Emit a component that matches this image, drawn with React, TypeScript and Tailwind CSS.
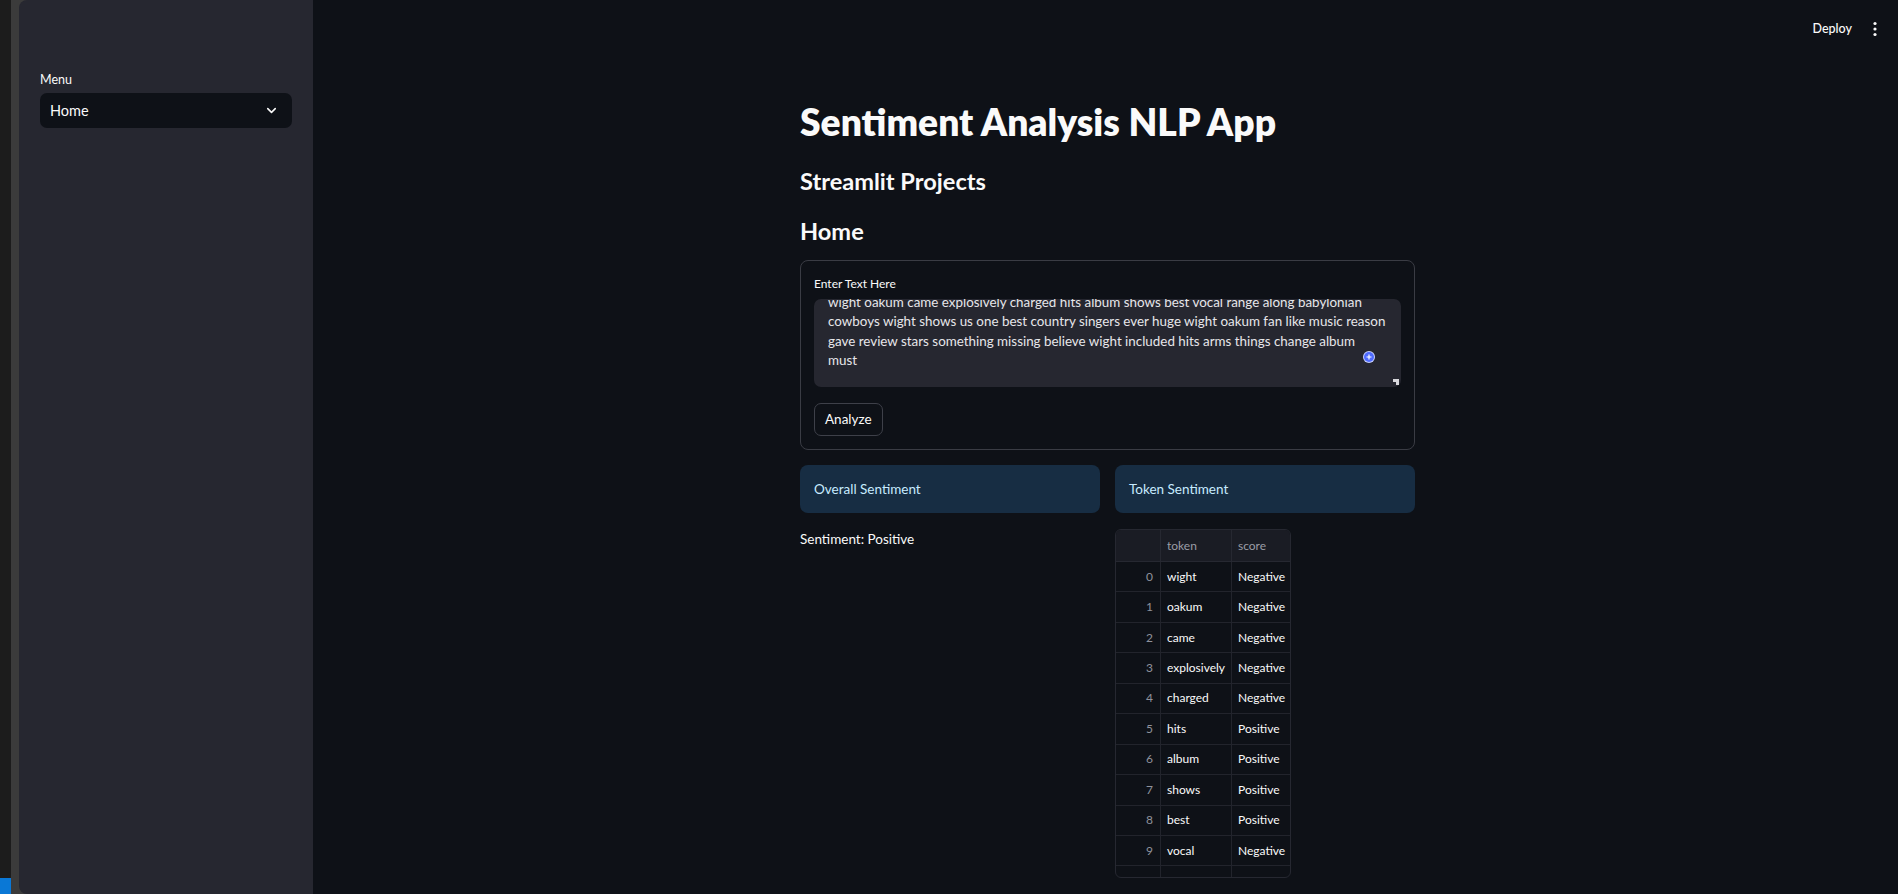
import { ChevronDown } from "lucide-react";

const lines = [
  "wight oakum came explosively charged hits album shows best vocal range along babylonian",
  "cowboys wight shows us one best country singers ever huge wight oakum fan like music reason",
  "gave review stars something missing believe wight included hits arms things change album",
  "must",
];

const rows: [string, string][] = [
  ["wight", "Negative"],
  ["oakum", "Negative"],
  ["came", "Negative"],
  ["explosively", "Negative"],
  ["charged", "Negative"],
  ["hits", "Positive"],
  ["album", "Positive"],
  ["shows", "Positive"],
  ["best", "Positive"],
  ["vocal", "Negative"],
];

function TokenTable() {
  return (
    <div className="h-[349px] w-[176px] overflow-hidden rounded-[6px] border border-[#262831] text-[12px]">
      {/* header */}
      <div className="grid h-[32px] grid-cols-[45px_71px_1fr] border-b border-[#262831] bg-[#1a1c24] text-[#9a9ca6]">
        <div className="border-r border-[#262831]" />
        <div className="flex items-center border-r border-[#262831] pl-[6px]">token</div>
        <div className="flex items-center pl-[6px]">score</div>
      </div>
      {rows.map(([tok, score], i) => (
        <div key={i} className="grid h-[30.45px] grid-cols-[45px_71px_1fr] border-b border-[#22242c] text-[#fafafa]">
          <div className="flex items-center justify-end border-r border-[#22242c] pr-[7px] text-[#8f929c]">{i}</div>
          <div className="flex items-center border-r border-[#22242c] pl-[6px]">{tok}</div>
          <div className="flex items-center pl-[6px]">{score}</div>
        </div>
      ))}
      {/* partially scrolled-in row */}
      <div className="grid h-[30.45px] grid-cols-[45px_71px_1fr]">
        <div className="border-r border-[#22242c]" />
        <div className="border-r border-[#22242c]" />
        <div />
      </div>
    </div>
  );
}

export default function App() {
  return (
    <div className="flex h-screen w-full overflow-hidden bg-[#0e1117] font-['Lato',sans-serif] text-[#fafafa]">
      {/* window edge */}
      <div className="flex w-[11px] flex-col justify-end bg-[#1c1c1c]">
        <div className="h-[16px] bg-[#0a78d6]" />
      </div>
      <div className="flex bg-[#3b3b3b] pl-[8px]">
        {/* sidebar */}
        <aside className="w-[294px] rounded-l-[8px] bg-[#262730] px-[21px] pt-[71px]">
          <div className="h-[18px] text-[12.5px] leading-[18px]">Menu</div>
          <div className="mt-[4px] flex h-[35px] items-center justify-between rounded-[7px] bg-[#0e1117] pl-[10px] pr-[13px] text-[14.5px]">
            <span>Home</span>
            <ChevronDown size={15} strokeWidth={2.5} />
          </div>
        </aside>
      </div>

      {/* main */}
      <main className="relative flex-1">
        <div className="absolute right-[20px] top-[20px] flex items-center gap-[20px]">
          <span className="text-[12.5px] font-medium">Deploy</span>
          <svg width="6" height="16" viewBox="0 0 6 16" className="fill-[#fafafa]">
            <circle cx="3" cy="2.5" r="1.6" />
            <circle cx="3" cy="8" r="1.6" />
            <circle cx="3" cy="13.5" r="1.6" />
          </svg>
        </div>

        <div className="mx-auto w-[615px] translate-x-[2px] pt-[98px]">
          <h1 className="h-[48px] whitespace-nowrap text-[37.2px] font-extrabold leading-[48px]">Sentiment Analysis NLP App</h1>
          <h3 className="mt-[18px] h-[34px] text-[23.6px] font-bold leading-[34px]">Streamlit Projects</h3>
          <h3 className="mt-[16px] h-[34px] text-[23.6px] font-bold leading-[34px]">Home</h3>

          {/* form container */}
          <div className="mt-[12px] rounded-[8px] border border-[#3a3c44] px-[13px] pb-[13px] pt-[13px]">
            <div className="h-[20px] text-[12px] leading-[20px]">Enter Text Here</div>
            <div className="relative mt-[5px] h-[88px] overflow-hidden rounded-[7px] bg-[#262730]">
              <div className="-mt-[6px] pl-[14px] text-[13.4px] leading-[19.4px] text-[#e6e6ea]">
                {lines.map((l, i) => (
                  <div key={i} className="whitespace-nowrap">{l}</div>
                ))}
              </div>
              <div className="absolute right-[27px] top-[53px] flex h-[10px] w-[10px] items-center justify-center rounded-full bg-[#4f6bff] ring-1 ring-[#c7d0ff]">
                <svg width="6" height="6" viewBox="0 0 6 6" className="stroke-white" strokeWidth="1.2">
                  <path d="M3 0.5v5M0.5 3h5" />
                </svg>
              </div>
              <svg width="6" height="6" viewBox="0 0 6 6" className="absolute bottom-[2px] right-[2px] fill-[#d8d8dc]">
                <path d="M0 0h6v6h-3v-3h-3z" />
              </svg>
            </div>
            <button className="mt-[16px] flex h-[33px] items-center rounded-[7px] border border-[#3e4049] px-[10px] text-[13.5px]">
              Analyze
            </button>
          </div>

          {/* results */}
          <div className="mt-[15px] grid grid-cols-2 gap-[15px]">
            <div className="flex flex-col gap-[16px]">
              <div className="flex h-[48px] items-center rounded-[8px] bg-[#172d43] px-[14px] text-[13.5px] text-[#c7ebff]">
                Overall Sentiment
              </div>
              <div className="-mt-[2px] h-[24px] text-[13.5px] leading-[24px]">Sentiment: Positive</div>
            </div>
            <div className="flex flex-col gap-[16px]">
              <div className="flex h-[48px] items-center rounded-[8px] bg-[#172d43] px-[14px] text-[13.5px] text-[#c7ebff]">
                Token Sentiment
              </div>
              <TokenTable />
            </div>
          </div>
        </div>
      </main>
    </div>
  );
}
